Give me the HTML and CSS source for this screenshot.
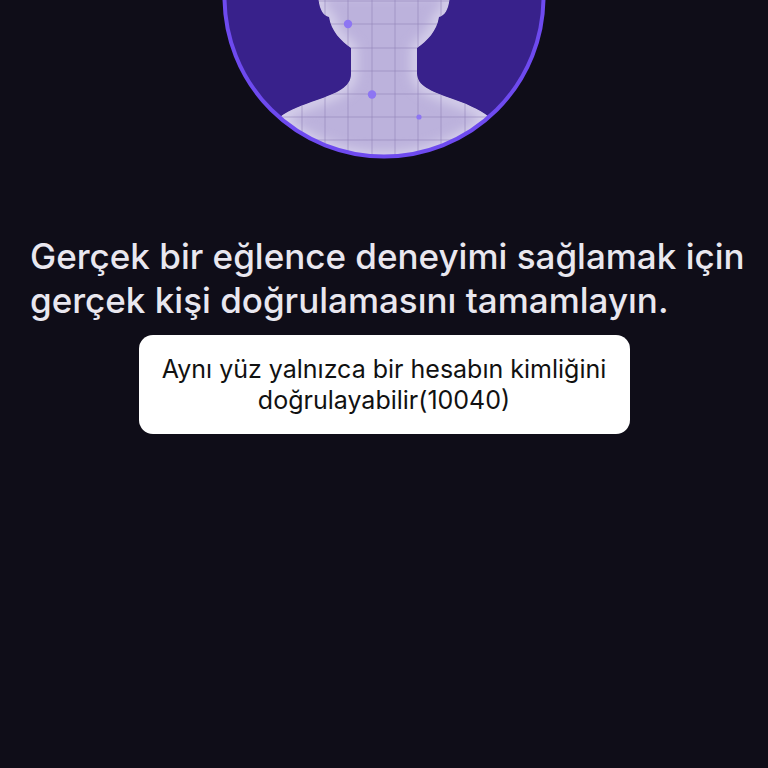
FILE: index.html
```
<!DOCTYPE html>
<html lang="tr">
<head>
    <meta charset="utf-8">
    <meta name="viewport" content="width=device-width, initial-scale=1">
    <title>Gerçek kişi doğrulaması</title>
    <link rel="stylesheet" href="styles.css">
</head>
<body>
    <main class="verify">
        <svg class="face" viewBox="222 0 324 160" aria-hidden="true">
            <defs>
                <clipPath id="ring">
                    <circle cx="384" cy="-3" r="160"/>
                </clipPath>
                <path id="person" d="M318 -10 C318 5 321 15 329 17 C331 31 341 41 351 48 V74 C351 87 337 93 317 100 C303 105 290 109 280 117 L260 180 H508 L489 117 C479 109 465 103 450 98 C431 91 417 86 417 73 V48 C427 41 437 31 439 17 C447 15 450 5 450 -10 Z"/>
                <clipPath id="body">
                    <use href="#person"/>
                </clipPath>
                <filter id="soft" x="-20%" y="-20%" width="140%" height="140%">
                    <feGaussianBlur stdDeviation="6"/>
                </filter>
            </defs>
            <circle cx="384" cy="-3" r="160" fill="#38218b"/>
            <g clip-path="url(#ring)">
                <g clip-path="url(#body)">
                    <use href="#person" fill="#bcb2dc"/>
                    <use href="#person" fill="none" stroke="#dcd7ee" stroke-width="10" filter="url(#soft)"/>
                    <circle cx="384" cy="-3" r="162" fill="none" stroke="#dcd7ee" stroke-width="12" filter="url(#soft)"/>
                    <path d="M302 0V160 M325 0V160 M348 0V160 M372 0V160 M395 0V160 M418 0V160 M441 0V160 M465 0V160 M270 1H500 M270 24H500 M270 48H500 M270 71H500 M270 94H500 M270 117H500 M270 140H500" stroke="#8f82b8" stroke-opacity=".55" stroke-width="1" fill="none"/>
                </g>
            </g>
            <circle cx="348" cy="24" r="4.2" fill="#8d75f3"/>
            <circle cx="372" cy="94.5" r="4.2" fill="#8d75f3"/>
            <circle cx="419" cy="117" r="2.6" fill="#8d75f3"/>
            <circle cx="384" cy="-3" r="159.5" fill="none" stroke="#6e4aef" stroke-width="4"/>
        </svg>
        <h1 class="title">Gerçek bir eğlence deneyimi sağlamak için gerçek kişi doğrulamasını tamamlayın.</h1>
        <div class="toast" role="alert">Aynı yüz yalnızca bir hesabın kimliğini doğrulayabilir(10040)</div>
    </main>
</body>
</html>
```
FILE: styles.css
```
body {
    margin: 0;
    background-color: #0f0d18;
    font-family: Inter, "Liberation Sans", sans-serif;
}
.verify {
    display: flex;
    flex-direction: column;
    align-items: center;
    min-height: 100vh;
}
.face {
    display: block;
    width: 324px;
    max-width: 100%;
}
.title {
    align-self: stretch;
    margin: 74px 0 13px;
    padding: 0 16px 0 30px;
    color: #e9e7ef;
    font-size: 35px;
    font-weight: 500;
    line-height: 44px;
}
.toast {
    box-sizing: border-box;
    max-width: 491px;
    padding: 19px 16px 18px;
    border-radius: 14px;
    background-color: #fff;
    color: #111;
    font-size: 25px;
    line-height: 31px;
    text-align: center;
}
```
